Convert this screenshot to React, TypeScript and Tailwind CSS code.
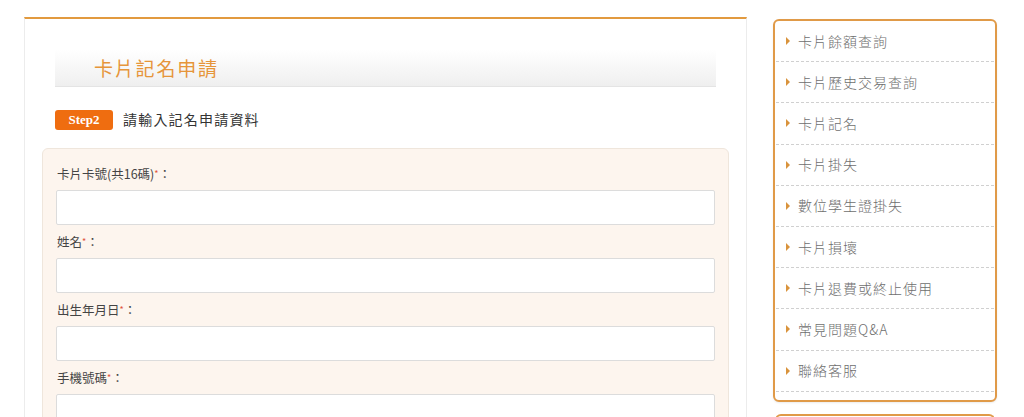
import React from 'react'

const FONT = { fontFamily: '"Noto Sans CJK TC", "Noto Sans", "Liberation Sans", sans-serif' }

const MENU = [
  '卡片餘額查詢',
  '卡片歷史交易查詢',
  '卡片記名',
  '卡片掛失',
  '數位學生證掛失',
  '卡片損壞',
  '卡片退費或終止使用',
  '常見問題Q&A',
  '聯絡客服',
]

const FIELDS = ['卡片卡號(共16碼)', '姓名', '出生年月日', '手機號碼']

export default function App() {
  return (
    <div className="w-[1024px] h-[417px] overflow-hidden bg-white" style={FONT}>
      <div className="flex items-start pt-[17px] pl-[24px]">
        {/* main column */}
        <div className="w-[723px] h-[420px] border-t-2 border-t-[#e29a3f] border-x border-x-[#ececec]">
          {/* title */}
          <div className="mt-[31px] mx-[30px] h-[37px] bg-gradient-to-b from-white to-[#efefef] border-b border-[#e4e4e4] flex items-center pl-[39px]">
            <h1 className="text-[19px] leading-none text-[#e6953a] font-normal tracking-[1.8px] -mt-[2px]">卡片記名申請</h1>
          </div>

          {/* step */}
          <div className="mt-[22px] ml-[30px] flex items-center gap-[10px]">
            <span
              className="w-[58px] h-[20px] rounded-[3px] bg-[#ef6d10] text-white text-[13px] font-bold flex items-center justify-center"
              style={{ fontFamily: '"Liberation Serif", "DejaVu Serif", serif' }}
            >
              Step2
            </span>
            <span className="text-[14px] text-[#333] tracking-[1.2px]">請輸入記名申請資料</span>
          </div>

          {/* form */}
          <div className="mt-[18px] mx-[17px] h-[300px] rounded-[6px] border border-[#efe6dc] bg-[#fdf5ee] px-[13px] pt-[16px]">
            {FIELDS.map(f => (
              <div key={f} className="mb-[2px]">
                <label className="block h-[18px] text-[12.5px] leading-[18px] text-[#444] pl-[1px]">
                  {f}<span className="text-[#e0533a] text-[9px] align-top">*</span>：
                </label>
                <div className="mt-[7px] h-[35px] bg-white border border-[#dcdcdc] rounded-[2px]" />
                <div className="h-[6px]" />
              </div>
            ))}
          </div>
        </div>

        {/* sidebar */}
        <div className="ml-[26px] mt-[2px] w-[224px]">
          <div className="h-[383px] border-2 border-[#e09a48] rounded-[6px] bg-white shadow-[0_1px_2px_rgba(0,0,0,0.08)]">
            {MENU.map(m => (
              <div
                key={m}
                className="h-[41.2px] mx-[1px] border-b border-dashed border-[#d0d0d0] flex items-center pl-[10px] gap-[8px]"
              >
                <span className="w-0 h-0 border-y-[4px] border-y-transparent border-l-[4px] border-l-[#d9933c]" />
                <span className="text-[14px] text-[#6e6e6e] font-light tracking-[1px]">{m}</span>
              </div>
            ))}
          </div>
          <div className="mt-[12px] mx-[2px] h-[20px] border-2 border-[#e09a48] rounded-t-[6px] border-b-0" />
        </div>
      </div>
    </div>
  )
}
